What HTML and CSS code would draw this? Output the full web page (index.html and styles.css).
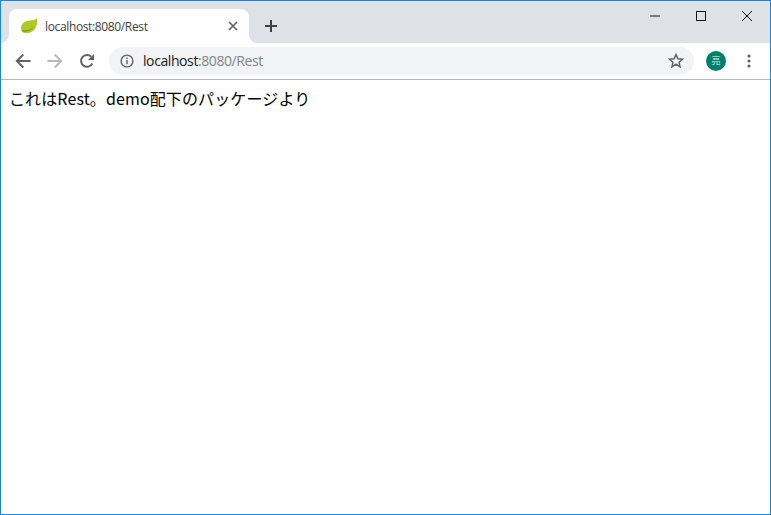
FILE: index.html
```html
<!DOCTYPE html>
<html lang="ja">
<head>
<meta charset="utf-8">
<title>localhost:8080/Rest</title>
<link rel="stylesheet" href="styles.css">
</head>
<body>
<div class="window">
  <header class="tabstrip">
    <div class="tab">
      <svg class="favicon" width="18" height="16" viewBox="0 0 18 16">
        <path d="M1 10C1.200 5.500 5 2.800 9.500 2.500c3-.2 5.800-.7 7.500-2.300.5 4.300-.2 9-3.200 12.100-2.800 2.800-7.500 3.500-10.300 2.400C1.800 14 .9 12.300 1 10z" fill="#b0c828"/>
        <path d="M2.500 12.300c4.200.8 8.500-.3 11.500-4-1.800 3.200-6 5.700-11 5.200z" fill="#4f8a35"/>
      </svg>
      <span class="tab-title">localhost:8080/Rest</span>
      <svg class="tab-close" width="10" height="10" viewBox="0 0 10 10"><path d="M1 1l8 8M9 1l-8 8" stroke="#5f6368" stroke-width="1.700" fill="none"/></svg>
    </div>
    <svg class="new-tab" width="12" height="12" viewBox="0 0 12 12"><path d="M6 0v12M0 6h12" stroke="#3c4043" stroke-width="2" fill="none"/></svg>
    <div class="window-controls">
      <svg class="ctl" width="46" height="30" viewBox="0 0 46 30"><path d="M18 15h10" stroke="#111" stroke-width="1" fill="none"/></svg>
      <svg class="ctl" width="46" height="30" viewBox="0 0 46 30"><rect x="18.500" y="10.500" width="9" height="9" stroke="#111" stroke-width="1" fill="none"/></svg>
      <svg class="ctl" width="46" height="30" viewBox="0 0 46 30"><path d="M18 10l10 10M28 10l-10 10" stroke="#111" stroke-width="1" fill="none"/></svg>
    </div>
  </header>
  <nav class="toolbar">
    <svg class="nav-icon" width="16" height="16" viewBox="0 0 16 16"><path d="M15.500 8H2M8.300 1.500L1.800 8l6.500 6.500" stroke="#5f6368" stroke-width="2" fill="none"/></svg>
    <svg class="nav-icon forward" width="16" height="16" viewBox="0 0 16 16"><path d="M.5 8H14M7.700 1.500L14.200 8l-6.500 6.500" stroke="#b8babd" stroke-width="2" fill="none"/></svg>
    <svg class="nav-icon reload" width="16" height="16" viewBox="0 0 16 16"><path d="M13.300 10.500A5.900 5.900 0 1 1 12.200 3.800" stroke="#5f6368" stroke-width="2" fill="none"/><path d="M15 .9V7H9z" fill="#5f6368"/></svg>
    <div class="omnibox">
      <svg class="info" width="14" height="14" viewBox="0 0 14 14"><circle cx="7" cy="7" r="5.900" stroke="#5f6368" stroke-width="1.400" fill="none"/><path d="M7 6v4.200M7 3.500v1.500" stroke="#5f6368" stroke-width="1.400" fill="none"/></svg>
      <span class="url"><span class="host">localhost</span>:8080/Rest</span>
      <svg class="star" width="16" height="15" viewBox="0 0 16 15"><path d="M8 1.500l1.900 4.200 4.600.5-3.400 3.100.9 4.500L8 11.100l-4 2.700.9-4.500-3.400-3.100 4.600-.5z" stroke="#5f6368" stroke-width="1.500" fill="none"/></svg>
    </div>
    <div class="avatar">亮</div>
    <svg class="menu" width="4" height="14" viewBox="0 0 4 14"><circle cx="2" cy="2" r="1.600" fill="#5f6368"/><circle cx="2" cy="7" r="1.600" fill="#5f6368"/><circle cx="2" cy="12" r="1.600" fill="#5f6368"/></svg>
  </nav>
  <main class="content">これはRest。demo配下のパッケージより</main>
</div>
</body>
</html>
```
FILE: styles.css
```css
* { box-sizing: border-box; }
html, body { margin: 0; height: 100%; }
body { background: #fff; overflow: hidden; }
.window {
  height: 515px;
  border: 1px solid #1587e0;
  display: flex;
  flex-direction: column;
  font-family: "Noto Sans CJK JP", "Noto Sans", sans-serif;
}
.tabstrip {
  height: 42px;
  flex: none;
  background: #dee1e6;
  display: flex;
  align-items: flex-end;
  padding-left: 8px;
}
.tab {
  position: relative;
  width: 240px;
  height: 34px;
  background: #fff;
  border-radius: 8px 8px 0 0;
  display: flex;
  align-items: center;
  padding: 0 11px 0 11px;
}
.tab::before, .tab::after {
  content: "";
  position: absolute;
  bottom: 0;
  width: 8px;
  height: 8px;
}
.tab::before { left: -8px; background: radial-gradient(circle at 0 0, transparent 7.500px, #fff 8px); }
.tab::after { right: -8px; background: radial-gradient(circle at 100% 0, transparent 7.500px, #fff 8px); }
.favicon { flex: none; }
.tab-title {
  margin-left: 7px;
  font: 12px "Open Sans", "Liberation Sans", sans-serif;
  letter-spacing: -0.36px;
  color: #3c4043;
  flex: 1;
  white-space: nowrap;
}
.tab-close { flex: none; }
.new-tab { margin: 0 0 11px 16px; flex: none; }
.window-controls { margin-left: auto; align-self: flex-start; display: flex; }
.ctl { display: block; }
.toolbar {
  height: 37px;
  flex: none;
  background: #fff;
  border-bottom: 1px solid #b4b6b8;
  display: flex;
  align-items: center;
  padding: 0 0 1px 14px;
}
.nav-icon { flex: none; margin-right: 16px; }
.reload { margin-right: 14px; }
.omnibox {
  width: 585px;
  height: 28px;
  background: #f1f3f4;
  border-radius: 14px;
  display: flex;
  align-items: center;
  padding: 0 10px 0 11px;
  flex: none;
}
.info { flex: none; }
.url {
  margin-left: 9px;
  flex: 1;
  font: 14px "Open Sans", "Liberation Sans", sans-serif;
  letter-spacing: -0.41px;
  color: #80868b;
}
.host { color: #202124; }
.star { flex: none; }
.avatar {
  width: 20px;
  height: 20px;
  margin-left: 12px;
  border-radius: 50%;
  background: #00806b;
  color: #d7efe9;
  font-size: 9px;
  line-height: 20px;
  text-align: center;
  flex: none;
}
.menu { margin-left: 21px; flex: none; }
.content {
  padding: 6px 0 0 8px;
  font-size: 16px;
  line-height: 24px;
  letter-spacing: 0.12px;
  color: #000;
  white-space: nowrap;
}
```
